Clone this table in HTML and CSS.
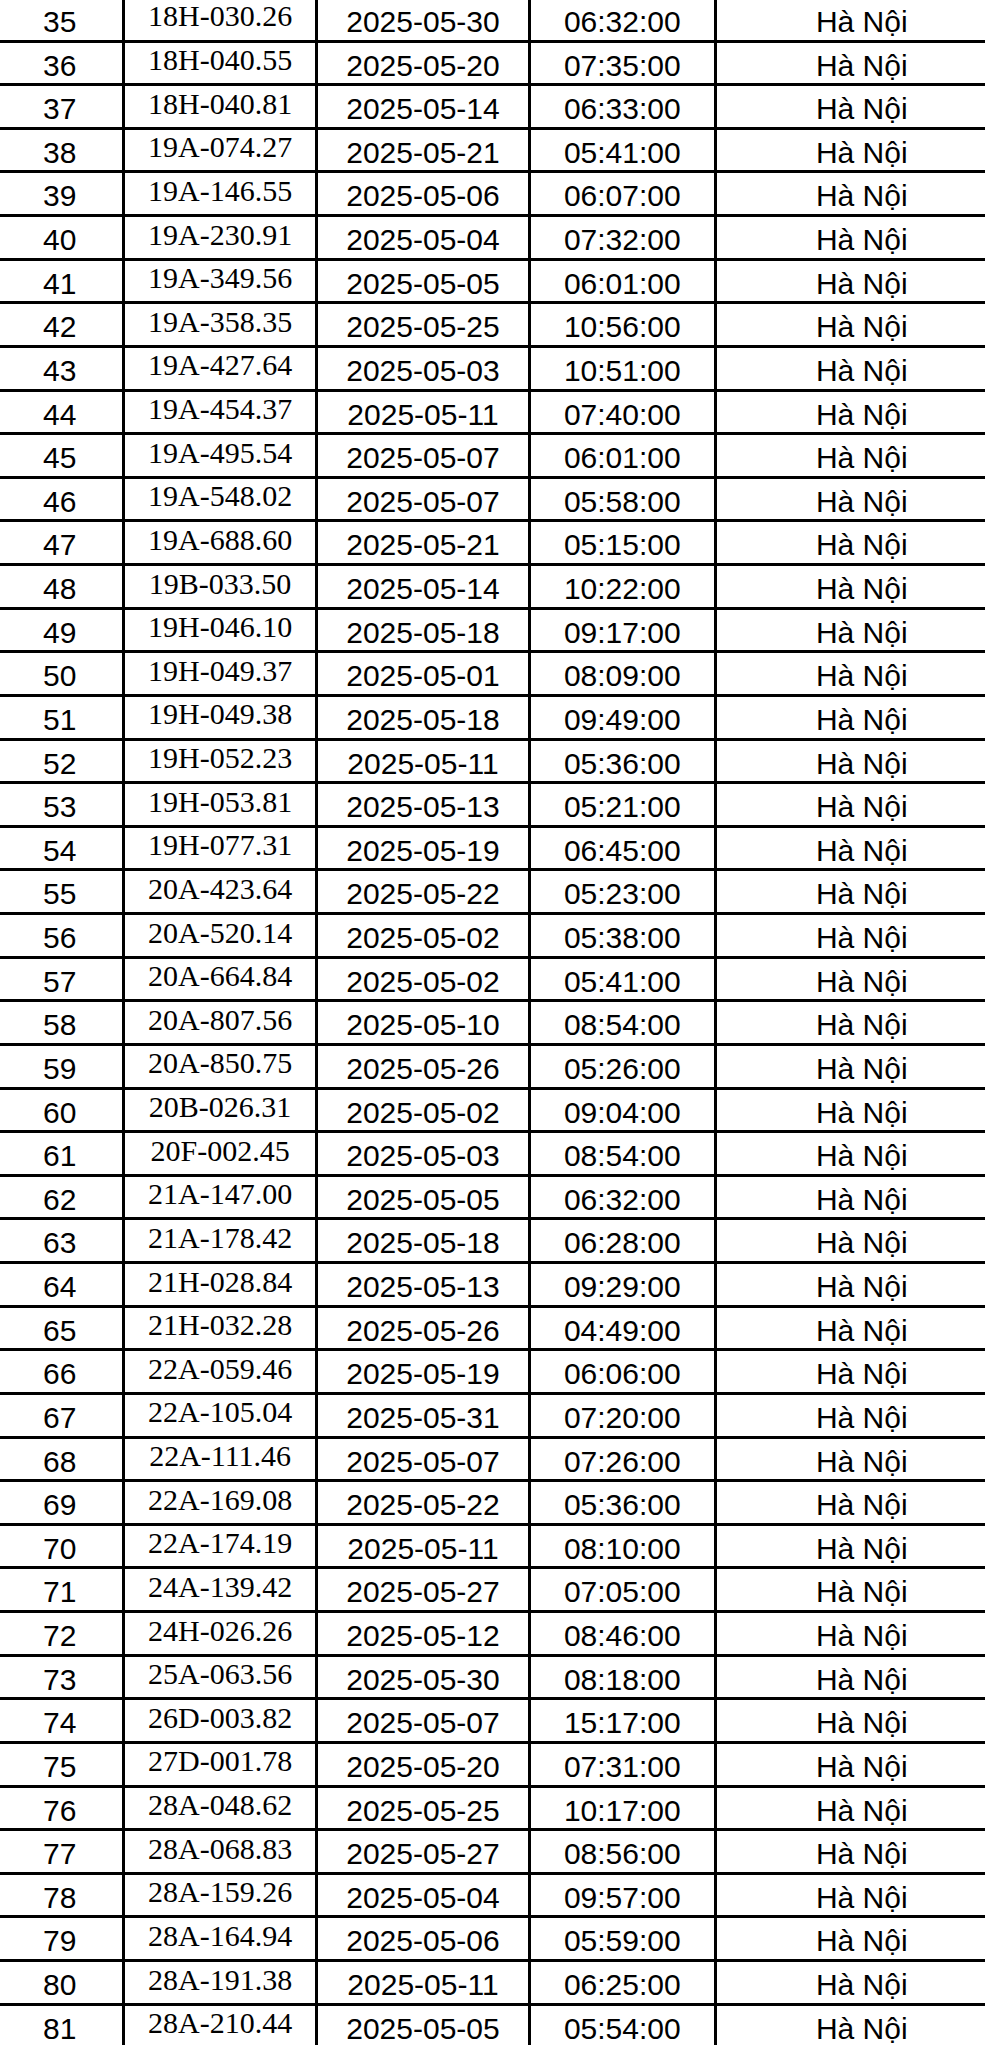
FILE: index.html
```html
<!DOCTYPE html>
<html lang="vi">
<head>
<meta charset="utf-8">
<title>Danh sách</title>
<link rel="stylesheet" href="styles.css">
</head>
<body>
<table class="sheet">
<tbody>
<tr><td class="num">35</td><td class="plate">18H-030.26</td><td class="date">2025-05-30</td><td class="time">06:32:00</td><td class="city">Hà Nội</td></tr>
<tr><td class="num">36</td><td class="plate">18H-040.55</td><td class="date">2025-05-20</td><td class="time">07:35:00</td><td class="city">Hà Nội</td></tr>
<tr><td class="num">37</td><td class="plate">18H-040.81</td><td class="date">2025-05-14</td><td class="time">06:33:00</td><td class="city">Hà Nội</td></tr>
<tr><td class="num">38</td><td class="plate">19A-074.27</td><td class="date">2025-05-21</td><td class="time">05:41:00</td><td class="city">Hà Nội</td></tr>
<tr><td class="num">39</td><td class="plate">19A-146.55</td><td class="date">2025-05-06</td><td class="time">06:07:00</td><td class="city">Hà Nội</td></tr>
<tr><td class="num">40</td><td class="plate">19A-230.91</td><td class="date">2025-05-04</td><td class="time">07:32:00</td><td class="city">Hà Nội</td></tr>
<tr><td class="num">41</td><td class="plate">19A-349.56</td><td class="date">2025-05-05</td><td class="time">06:01:00</td><td class="city">Hà Nội</td></tr>
<tr><td class="num">42</td><td class="plate">19A-358.35</td><td class="date">2025-05-25</td><td class="time">10:56:00</td><td class="city">Hà Nội</td></tr>
<tr><td class="num">43</td><td class="plate">19A-427.64</td><td class="date">2025-05-03</td><td class="time">10:51:00</td><td class="city">Hà Nội</td></tr>
<tr><td class="num">44</td><td class="plate">19A-454.37</td><td class="date">2025-05-11</td><td class="time">07:40:00</td><td class="city">Hà Nội</td></tr>
<tr><td class="num">45</td><td class="plate">19A-495.54</td><td class="date">2025-05-07</td><td class="time">06:01:00</td><td class="city">Hà Nội</td></tr>
<tr><td class="num">46</td><td class="plate">19A-548.02</td><td class="date">2025-05-07</td><td class="time">05:58:00</td><td class="city">Hà Nội</td></tr>
<tr><td class="num">47</td><td class="plate">19A-688.60</td><td class="date">2025-05-21</td><td class="time">05:15:00</td><td class="city">Hà Nội</td></tr>
<tr><td class="num">48</td><td class="plate">19B-033.50</td><td class="date">2025-05-14</td><td class="time">10:22:00</td><td class="city">Hà Nội</td></tr>
<tr><td class="num">49</td><td class="plate">19H-046.10</td><td class="date">2025-05-18</td><td class="time">09:17:00</td><td class="city">Hà Nội</td></tr>
<tr><td class="num">50</td><td class="plate">19H-049.37</td><td class="date">2025-05-01</td><td class="time">08:09:00</td><td class="city">Hà Nội</td></tr>
<tr><td class="num">51</td><td class="plate">19H-049.38</td><td class="date">2025-05-18</td><td class="time">09:49:00</td><td class="city">Hà Nội</td></tr>
<tr><td class="num">52</td><td class="plate">19H-052.23</td><td class="date">2025-05-11</td><td class="time">05:36:00</td><td class="city">Hà Nội</td></tr>
<tr><td class="num">53</td><td class="plate">19H-053.81</td><td class="date">2025-05-13</td><td class="time">05:21:00</td><td class="city">Hà Nội</td></tr>
<tr><td class="num">54</td><td class="plate">19H-077.31</td><td class="date">2025-05-19</td><td class="time">06:45:00</td><td class="city">Hà Nội</td></tr>
<tr><td class="num">55</td><td class="plate">20A-423.64</td><td class="date">2025-05-22</td><td class="time">05:23:00</td><td class="city">Hà Nội</td></tr>
<tr><td class="num">56</td><td class="plate">20A-520.14</td><td class="date">2025-05-02</td><td class="time">05:38:00</td><td class="city">Hà Nội</td></tr>
<tr><td class="num">57</td><td class="plate">20A-664.84</td><td class="date">2025-05-02</td><td class="time">05:41:00</td><td class="city">Hà Nội</td></tr>
<tr><td class="num">58</td><td class="plate">20A-807.56</td><td class="date">2025-05-10</td><td class="time">08:54:00</td><td class="city">Hà Nội</td></tr>
<tr><td class="num">59</td><td class="plate">20A-850.75</td><td class="date">2025-05-26</td><td class="time">05:26:00</td><td class="city">Hà Nội</td></tr>
<tr><td class="num">60</td><td class="plate">20B-026.31</td><td class="date">2025-05-02</td><td class="time">09:04:00</td><td class="city">Hà Nội</td></tr>
<tr><td class="num">61</td><td class="plate">20F-002.45</td><td class="date">2025-05-03</td><td class="time">08:54:00</td><td class="city">Hà Nội</td></tr>
<tr><td class="num">62</td><td class="plate">21A-147.00</td><td class="date">2025-05-05</td><td class="time">06:32:00</td><td class="city">Hà Nội</td></tr>
<tr><td class="num">63</td><td class="plate">21A-178.42</td><td class="date">2025-05-18</td><td class="time">06:28:00</td><td class="city">Hà Nội</td></tr>
<tr><td class="num">64</td><td class="plate">21H-028.84</td><td class="date">2025-05-13</td><td class="time">09:29:00</td><td class="city">Hà Nội</td></tr>
<tr><td class="num">65</td><td class="plate">21H-032.28</td><td class="date">2025-05-26</td><td class="time">04:49:00</td><td class="city">Hà Nội</td></tr>
<tr><td class="num">66</td><td class="plate">22A-059.46</td><td class="date">2025-05-19</td><td class="time">06:06:00</td><td class="city">Hà Nội</td></tr>
<tr><td class="num">67</td><td class="plate">22A-105.04</td><td class="date">2025-05-31</td><td class="time">07:20:00</td><td class="city">Hà Nội</td></tr>
<tr><td class="num">68</td><td class="plate">22A-111.46</td><td class="date">2025-05-07</td><td class="time">07:26:00</td><td class="city">Hà Nội</td></tr>
<tr><td class="num">69</td><td class="plate">22A-169.08</td><td class="date">2025-05-22</td><td class="time">05:36:00</td><td class="city">Hà Nội</td></tr>
<tr><td class="num">70</td><td class="plate">22A-174.19</td><td class="date">2025-05-11</td><td class="time">08:10:00</td><td class="city">Hà Nội</td></tr>
<tr><td class="num">71</td><td class="plate">24A-139.42</td><td class="date">2025-05-27</td><td class="time">07:05:00</td><td class="city">Hà Nội</td></tr>
<tr><td class="num">72</td><td class="plate">24H-026.26</td><td class="date">2025-05-12</td><td class="time">08:46:00</td><td class="city">Hà Nội</td></tr>
<tr><td class="num">73</td><td class="plate">25A-063.56</td><td class="date">2025-05-30</td><td class="time">08:18:00</td><td class="city">Hà Nội</td></tr>
<tr><td class="num">74</td><td class="plate">26D-003.82</td><td class="date">2025-05-07</td><td class="time">15:17:00</td><td class="city">Hà Nội</td></tr>
<tr><td class="num">75</td><td class="plate">27D-001.78</td><td class="date">2025-05-20</td><td class="time">07:31:00</td><td class="city">Hà Nội</td></tr>
<tr><td class="num">76</td><td class="plate">28A-048.62</td><td class="date">2025-05-25</td><td class="time">10:17:00</td><td class="city">Hà Nội</td></tr>
<tr><td class="num">77</td><td class="plate">28A-068.83</td><td class="date">2025-05-27</td><td class="time">08:56:00</td><td class="city">Hà Nội</td></tr>
<tr><td class="num">78</td><td class="plate">28A-159.26</td><td class="date">2025-05-04</td><td class="time">09:57:00</td><td class="city">Hà Nội</td></tr>
<tr><td class="num">79</td><td class="plate">28A-164.94</td><td class="date">2025-05-06</td><td class="time">05:59:00</td><td class="city">Hà Nội</td></tr>
<tr><td class="num">80</td><td class="plate">28A-191.38</td><td class="date">2025-05-11</td><td class="time">06:25:00</td><td class="city">Hà Nội</td></tr>
<tr><td class="num">81</td><td class="plate">28A-210.44</td><td class="date">2025-05-05</td><td class="time">05:54:00</td><td class="city">Hà Nội</td></tr>
</tbody>
</table>
</body>
</html>
```

FILE: styles.css
```css
html, body {
  margin: 0;
  padding: 0;
  overflow: hidden;
  background: #fff;
}

.sheet {
  display: grid;
  grid-template-columns: 124.5px 190.2px 209.6px 183px 289.9px;
  grid-auto-rows: 40.63px;
  gap: 3px;
  width: max-content;
  margin: -1.13px 0 0 -2.5px;
  background: #000;
  border-spacing: 0;
}

.sheet tbody,
.sheet tr {
  display: contents;
}

.sheet td {
  display: block;
  background: #fff;
  text-align: center;
  color: #000;
  padding: 0;
  white-space: nowrap;
  overflow: hidden;
}

.num,
.date,
.time,
.city {
  font-family: "Liberation Sans", Arial, sans-serif;
  font-size: 30px;
  line-height: 30px;
  padding-top: 8px !important;
}

.plate {
  font-family: "Liberation Serif", "Times New Roman", serif;
  font-size: 30px;
  line-height: 30px;
  padding-top: 2.5px !important;
}
```
